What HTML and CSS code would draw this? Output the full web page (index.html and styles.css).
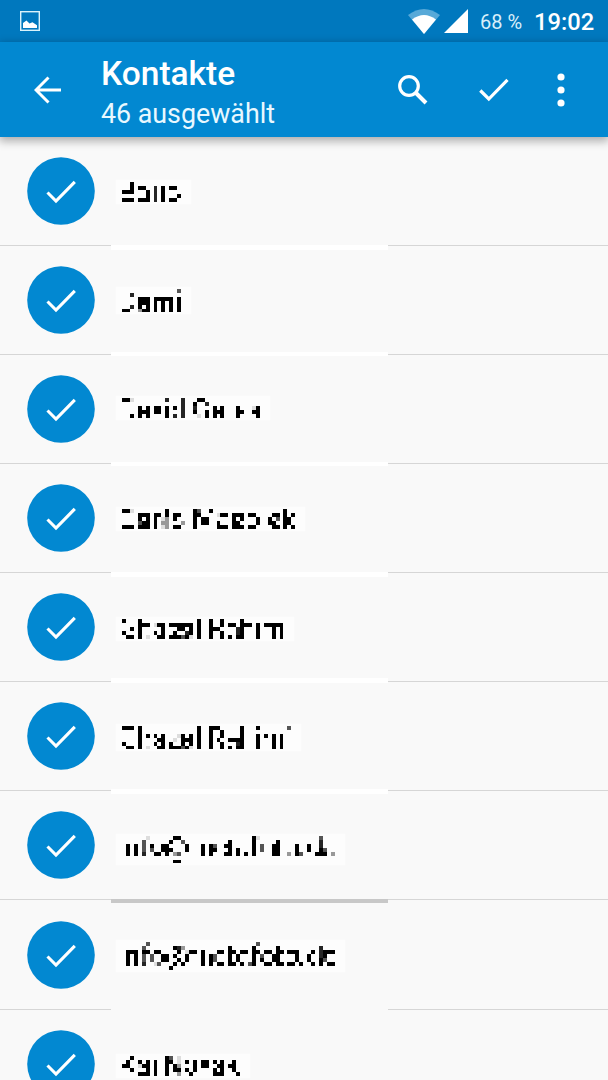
FILE: index.html
```html
<!DOCTYPE html>
<html lang="de">
<head>
<meta charset="utf-8">
<title>Kontakte</title>
<link rel="stylesheet" href="styles.css">
</head>
<body>
<div class="screen">
  <div class="status">
    <svg class="status-picture" viewBox="0 0 20 20"><rect x=".7" y=".7" width="18.6" height="18.6" fill="none" stroke="#d9f2fb" stroke-width="1.4"/><path fill="#fff" d="M3 17v-5l3.5-2.5 3 3 3-1.3 4.500 3V17z"/></svg>
    <svg class="status-wifi" viewBox="0 0 32 25"><path fill="#58a9d8" d="M0 6Q16-6 32 6L16 25z"/><path fill="#fff" d="M4 10.500Q16 1.500 28 10.500L16 25z"/></svg>
    <svg class="status-signal" viewBox="0 0 24 24"><path fill="#fff" d="M24 0v24H0z"/></svg>
    <span class="battery">68 %</span>
    <span class="clock">19:02</span>
  </div>
  <header class="toolbar">
    <svg class="back" viewBox="0 0 28 28"><path d="M27 14H2M14.500 1.500 2 14l12.500 12.500" fill="none" stroke="#fff" stroke-width="3"/></svg>
    <div class="titles">
      <h1 class="title">Kontakte</h1>
      <div class="subtitle">46 ausgewählt</div>
    </div>
    <svg class="search" viewBox="0 0 30 30"><circle cx="11" cy="11" r="9.300" fill="none" stroke="#fff" stroke-width="3.200"/><path d="m18 18 10 10" stroke="#fff" stroke-width="4"/></svg>
    <svg class="done" viewBox="0 0 30 24"><path d="m1.300 12.500 8.500 8.500L28.500 1.800" fill="none" stroke="#fff" stroke-width="3.200"/></svg>
    <svg class="more" viewBox="0 0 8 34"><g fill="#fff"><circle cx="4" cy="4" r="3.600"/><circle cx="4" cy="17" r="3.600"/><circle cx="4" cy="30" r="3.600"/></g></svg>
  </header>
  <main class="list" id="list"></main>
</div>
<script src="contacts.js"></script>
</body>
</html>
```
FILE: styles.css
```css
body { margin: 0; background: #f9f9f9; font-family: Roboto, "Noto Sans", sans-serif; }
.screen { height: 1080px; overflow: hidden; display: flex; flex-direction: column; }
.status { box-sizing: border-box; flex: none; height: 42px; padding: 0 14px 0 20px; display: flex; align-items: center; background: #0078be; color: #fff; }
.status-picture { width: 20px; height: 20px; }
.status-wifi { width: 32px; height: 25px; margin: 0 4px 0 auto; }
.status-signal { width: 24px; height: 24px; margin-right: 12px; }
.battery { width: 54px; font-size: 20px; color: #d9effa; white-space: nowrap; margin-top: 2px; }
.clock { width: 60px; font-size: 23.700px; font-weight: 500; white-space: nowrap; margin-top: 2px; }
.toolbar { position: relative; z-index: 1; box-sizing: border-box; flex: none; height: 95px; padding: 0 43px 0 34px; display: flex; align-items: center; background: #0288d1; color: #fff; box-shadow: 0 3px 9px 1px rgba(0, 0, 0, .32); }
.back { width: 28px; height: 28px; margin-right: 39px; }
.titles { flex: 1; padding-top: 8px; }
.title { margin: 0; font-size: 33.500px; line-height: 40px; font-weight: 500; }
.subtitle { font-size: 26.800px; line-height: 40px; color: #e9f8ff; }
.search { width: 30px; height: 30px; margin-right: 51px; }
.done { width: 30px; height: 24px; margin-right: 48px; }
.more { width: 8px; height: 34px; }
.list { margin-top: -.4px; }
.row { position: relative; box-sizing: border-box; height: 109.130px; padding-left: 27px; display: flex; align-items: center; border-bottom: 1px solid #d6d6d6; }
.check { flex: none; width: 68px; height: 68px; margin-right: 23px; }
.mosaic { align-self: flex-start; display: block; box-sizing: border-box; padding: 0 8px 0 4px; background: #fdfdfd; box-shadow: 0 0 1px 2px #fdfdfd; }
.strip { position: absolute; z-index: 1; left: 111px; width: 277px; height: 4.500px; background: #fff; }
.strip-grey { background: #c8c8c8; height: 4px; }
.strip-clear { background: #f9f9f9; }
```
FILE: contacts.js
```js
// Each contact name is shown as an anonymising mosaic. Rows are separated by "|";
// entries are filled columns or ranges, with an optional tone: d, g, m or l.
const CELL = 3.94;
const TONES = { d: '#252525', g: '#555', m: '#999', l: '#ddd' };
const rows = [
  { top: 45.7, strip: 108.5, cells: '2|2 4-5 8d 10 12-13|0-2 6 8d 10|6 8d 10 14|0-2 4-6 8d 10 12-13' },
  { top: 42.8, strip: 106.2, cells: '14g|2d|4-6 8-12 14|4-6 8 10 12 14|2d 4 6 8 10 12 14|0-1 4m 5-6 8 10 12 14' },
  { top: 43.6, strip: 106.7, cells: '0-1 2l 11d 15d 19-20|15d 18 21d|4 6 8-9 11 13 15d 18d 23 25 29 33l 34|4-6 8-9 11 15d 18 21 23-25 29-30 33-34|2 4 6 11 13d 15d 19l 21 23 25 29 34' },
  { top: 45, strip: 108.3, cells: '0-1 2l 11 18 19g 22 41|4-6 8-9 11 13-14 18-19 24l 25-26 28-30 32-33 38-39 41 43|4 6 8 10l 11m 13 18 20-21 28 30 34 37 39g 41-42|4g 5-6 8 10m 11m 15m 18 20-21 24 28-29 34 37-38 41-42|0-2 4-6 8 10l 11m 13-14 18 24-26 28-30 32-33 38-39 41 43' },
  { top: 46, strip: 105.2, cells: '0 4 19 22 25 30|4-6 8l 9-10 12-17 19 22 25 27-28 30-32 34 36-40|2 4 10 14-15 17 19 22-24 29d 30 34 38 40|0 4 8 10 13 16d 17 19 22 25 29d 30 34 38 40|1-2 4 6l 9-10 12-14 15g 16 17l 19 22 25 27 29-30 34 38 40' },
  { top: 43.3, strip: 107.2, cells: '0-2 4 19 22-24 30 34 42g|4 19 22 25 30|4 6 8 10 14l 15 17 19 22 25 30 34 36 38 40|4 9-10 13l 15-17 19 22 24 27-30 34 38 40|0 4 8 10 12 15 17 19 22 25 29d 30 34 38 40|1-2 4 6l 9-10 12-14 15g 16 17l 19 22 25 27 29-30 34 38 40' },
  { top: 44.3, strip: 108, tone: 'grey', cells: '6l 13-14 33 34l 50g|5g 12 15g 27 33 39 50d|1 3 5g 7 10-11 16 20 22 23g 26-27 33 35g 38-39 44 47 50d|1 3 5g 7g 10-12 16 20 22-23 27 29 33 35g 38-39 44 47 50 51g|1 3 5d 8-9 11 13m 14g 20 22 26-27 29 31 33 38-39 42m 44 45g 49-51 53m||13-14' },
  { top: 41.7, strip: 107.5, tone: 'clear', cells: '6g 34g|5g 13 14d 15m 27 33 39 50d|1-3 5-6 8-9 14 16l 17-18 20 24-25 27-28 30-31 33-34 36-37 39-40 42-44 48 50d 51-53|1 3 5g 7g 10-11 13 16 20 22 23g 27 29 33 35g 38-39 44 47 50d 51|1 3 5g 7g 10-11 14 16 20 22 23g 27 29 33 35 38-39 44 47 50 51g|1 3 5d 8l 9g 13 15 20 22 24-25 27-28 30 32g 33 36-37 39-40 42-43 45 48 50 52-53|12' },
  { top: 46.6, strip: 108, cells: '2 11 12g 14l|1 4 6 8 11-12 14l 16 18 20-21 23 25 28|0-1 4l 5-6 8 11 13 14m 18 20-21 24-25 27-28|2 6 8 11 13-14 16 18 23 25 28|4-6 8 11 14m 17 23-25 29' }
];

function mosaic(cells) {
  let rects = '';
  let columns = 0;
  const lines = cells.split('|');
  lines.forEach((line, y) => {
    for (const m of line.matchAll(/(\d+)(?:-(\d+))?([a-z])?/g)) {
      const start = Number(m[1]);
      const end = Number(m[2] || m[1]) + 1;
      columns = Math.max(columns, end);
      rects += `<rect x="${start}" y="${y}" width="${end - start}" height="1" fill="${TONES[m[3]] || '#000'}"/>`;
    }
  });
  return { rects, columns, lines: lines.length };
}

document.getElementById('list').innerHTML = rows.map(row => {
  const art = mosaic(row.cells);
  const width = art.columns * CELL;
  const height = art.lines * CELL;
  return `<div class="row">
    <svg class="check" viewBox="0 0 68 68"><circle cx="34" cy="34" r="33.800" fill="#0288d1"/><path d="m20.500 35.500 8.500 8.500L47.800 24.800" fill="none" stroke="#fff" stroke-width="3.100"/></svg>
    <svg class="mosaic" aria-hidden="true" shape-rendering="crispEdges" viewBox="0 0 ${art.columns} ${art.lines}" style="width:${width + 12}px;height:${height}px;margin-top:${row.top}px">${art.rects}</svg>
    <div class="strip ${row.tone ? 'strip-' + row.tone : ''}" style="top:${row.strip}px"></div>
  </div>`;
}).join('');
```
